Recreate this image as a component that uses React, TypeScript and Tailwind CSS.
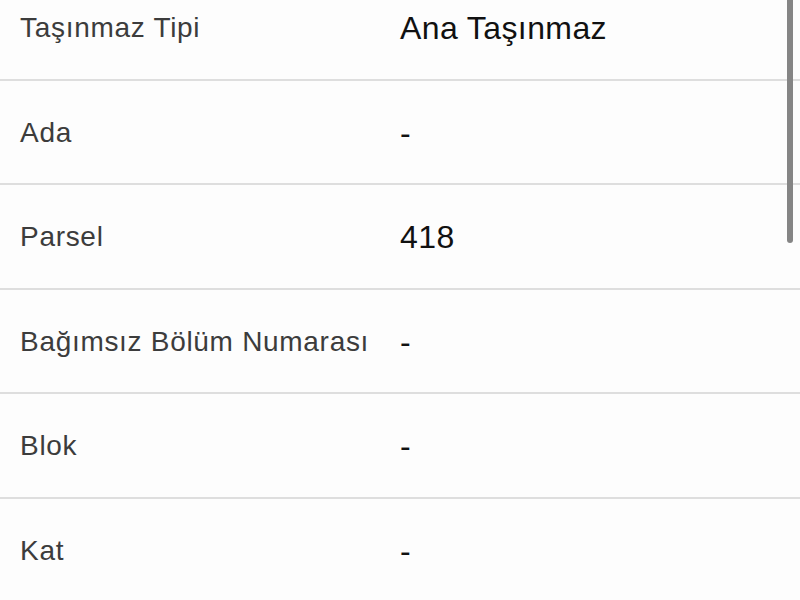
const rows: { label: string; value: string }[] = [
  { label: 'Taşınmaz Tipi', value: 'Ana Taşınmaz' },
  { label: 'Ada', value: '-' },
  { label: 'Parsel', value: '418' },
  { label: 'Bağımsız Bölüm Numarası', value: '-' },
  { label: 'Blok', value: '-' },
  { label: 'Kat', value: '-' },
]

export default function App() {
  return (
    <div className="relative w-[800px] h-[600px] overflow-hidden bg-[#fdfdfd]
                    font-['Liberation_Sans',Arial,sans-serif]">
      {/* 목록 */}
      <div className="-mt-[24px]">
        {rows.map((row) => (
          <div
            key={row.label}
            className="flex items-center h-[104.5px] border-b-2 border-[#dedede]"
          >
            <span className="w-[400px] pl-[20px] pt-[2px] text-[28px] tracking-[0.7px] text-[#3c3c3c]">
              {row.label}
            </span>
            <span className="pt-[2px] text-[32px] tracking-[0.4px] text-[#111]">
              {row.value}
            </span>
          </div>
        ))}
      </div>

      {/* scrollbar */}
      <div className="absolute right-[7px] -top-[10px] w-[6px] h-[253px] rounded-full bg-[#858585]" />
    </div>
  )
}
